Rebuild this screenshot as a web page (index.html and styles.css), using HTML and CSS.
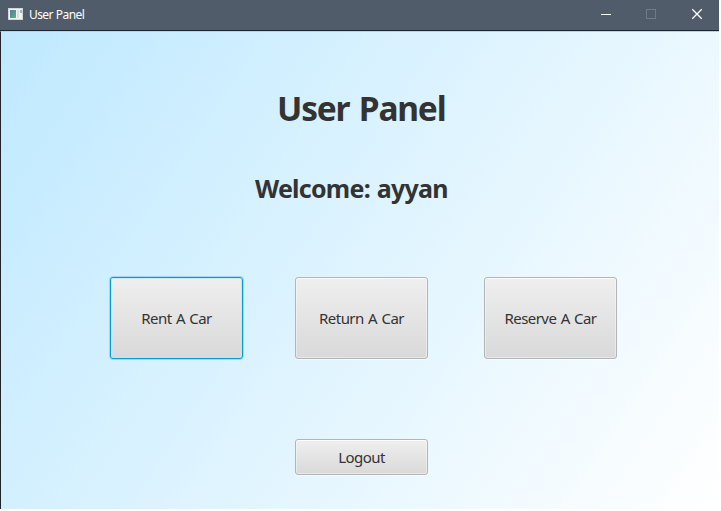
FILE: index.html
```html
<!DOCTYPE html>
<html lang="en">
<head>
<meta charset="utf-8">
<title>User Panel</title>
<link rel="stylesheet" href="styles.css">
</head>
<body>
<div class="window">
  <header class="titlebar">
    <svg class="app-icon" width="15" height="12" viewBox="0 0 15 12">
      <defs>
        <linearGradient id="pane" x1="0" y1="0" x2="1" y2="1">
          <stop offset="0" stop-color="#4b7fa6"/>
          <stop offset="1" stop-color="#63b07c"/>
        </linearGradient>
      </defs>
      <rect width="15" height="12" fill="#d3d6d8"/>
      <rect x="1" y="1" width="13" height="10" fill="#f3f3f3"/>
      <rect x="2" y="2" width="6" height="8" fill="url(#pane)"/>
      <rect x="9" y="2" width="2" height="8" fill="#dedede"/>
      <rect x="12" y="2" width="2" height="3" fill="#8fbdb0"/>
    </svg>
    <span class="caption">User Panel</span>
    <div class="controls">
      <svg width="46" height="30" viewBox="0 0 46 30"><path d="M20 14.5h10" stroke="#fff"/></svg>
      <svg width="46" height="30" viewBox="0 0 46 30"><rect x="19.5" y="9.5" width="9" height="9" fill="none" stroke="#717b88"/></svg>
      <svg width="46" height="30" viewBox="0 0 46 30"><path d="M19.3 9.3l9.4 9.4M28.7 9.3l-9.4 9.4" stroke="#fff" stroke-width="1.3"/></svg>
    </div>
  </header>
  <main class="scene">
    <h1 class="title">User Panel</h1>
    <h2 class="welcome">Welcome: ayyan</h2>
    <div class="actions">
      <button class="btn focused">Rent A Car</button>
      <button class="btn">Return A Car</button>
      <button class="btn">Reserve A Car</button>
    </div>
    <button class="btn logout">Logout</button>
  </main>
</div>
</body>
</html>
```
FILE: styles.css
```css
* { box-sizing: border-box; }
body {
  margin: 0;
  background: #fff;
  font-family: "Noto Sans", "Open Sans", sans-serif;
  color: #333;
  overflow: hidden;
}
.window { width: 719px; height: 509px; display: flex; flex-direction: column; }
.titlebar {
  height: 31px;
  flex: none;
  display: flex;
  align-items: flex-start;
  background: #515c6a;
  border-bottom: 1px solid #20252b;
  color: #fff;
}
.app-icon { margin: 8px 6px 0 8px; }
.caption { font-size: 12px; line-height: 16px; margin-top: 7px; letter-spacing: -0.6px; word-spacing: 0.5px; white-space: nowrap; }
.controls { display: flex; margin-left: auto; }
.controls svg { display: block; }
.scene {
  flex: 1;
  border-left: 1px solid #20252b;
  border-top: 1px solid #b6d3df;
  background: linear-gradient(123.7deg, #bfe9ff, #fff);
  display: flex;
  flex-direction: column;
}
h1, h2 { margin: 0; font-weight: 700; white-space: nowrap; }
.title { margin: 52px 0 0 276px; font-size: 33.5px; line-height: 48px; letter-spacing: -1.2px; word-spacing: 2px; }
.welcome { margin: 38px 0 0 254px; font-size: 25px; line-height: 36px; letter-spacing: -0.75px; word-spacing: 1px; }
.actions { display: flex; margin: 71px 0 0 109px; }
.actions .btn + .btn { margin-left: 52px; }
.actions .btn + .btn + .btn { margin-left: 56px; }
.btn {
  width: 133px;
  height: 82px;
  padding: 0;
  font: 15px/22px "Noto Sans", "Open Sans", sans-serif;
  color: #333;
  letter-spacing: -0.55px;
  word-spacing: 1px;
  white-space: nowrap;
  border: 1px solid #b2b4b6;
  border-radius: 3px;
  background: linear-gradient(#efefef, #d9d9d9);
  box-shadow: inset 0 0 0 1px rgba(255, 255, 255, .4), inset 0 1px 0 #fafafa, 0 1px 0 rgba(255, 255, 255, .55);
}
.focused {
  border-color: #039ed3;
  box-shadow: inset 0 0 0 1px rgba(195, 227, 240, .75), 0 0 0 1px rgba(3, 158, 211, .28);
}
.logout { height: 36px; margin: 80px 0 0 294px; }
```
